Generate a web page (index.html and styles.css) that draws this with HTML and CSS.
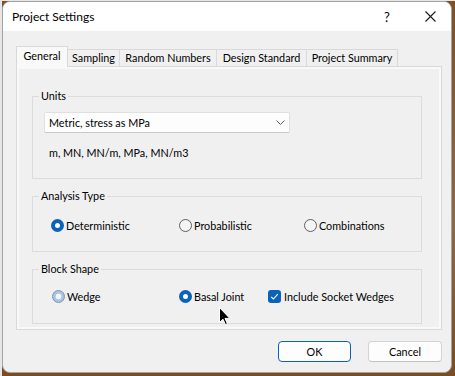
FILE: index.html
```html
<!DOCTYPE html>
<html lang="en">
<head>
    <meta charset="UTF-8">
    <title>Project Settings</title>
    <link rel="stylesheet" href="styles.css">
</head>
<body>
    <div class="window">
        <!-- caption bar -->
        <div class="titlebar">
            <span class="title">Project Settings</span>
            <span class="help">?</span>
            <svg class="close" width="11" height="11" viewBox="0 0 11 11">
                <path d="M0.5 0.5 L10.5 10.5 M10.5 0.5 L0.5 10.5" stroke="#1a1a1a" stroke-width="1.1" fill="none"/>
            </svg>
        </div>

        <div class="content">
            <div class="tabs">
                <div class="tab active w-general">General</div>
                <div class="tab w-sampling">Sampling</div>
                <div class="tab w-random">Random Numbers</div>
                <div class="tab w-design">Design Standard</div>
                <div class="tab w-summary">Project Summary</div>
            </div>

            <div class="panel">
                <fieldset class="group units">
                    <legend>Units</legend>
                    <div class="combo">
                        <span>Metric, stress as MPa</span>
                        <svg class="chevron" width="9" height="5" viewBox="0 0 9 5">
                            <polyline points="0.5,0.5 4.5,4.5 8.5,0.5" stroke="#5c5c5c" fill="none"/>
                        </svg>
                    </div>
                    <div class="unit-list">m, MN, MN/m, MPa, MN/m3</div>
                </fieldset>

                <fieldset class="group analysis">
                    <legend>Analysis Type</legend>
                    <div class="option-row">
                        <label class="option"><span class="radio checked"></span>Deterministic</label>
                        <label class="option"><span class="radio"></span>Probabilistic</label>
                        <label class="option"><span class="radio"></span>Combinations</label>
                    </div>
                </fieldset>

                <fieldset class="group block">
                    <legend>Block Shape</legend>
                    <div class="option-row">
                        <label class="option"><span class="radio pressed"></span>Wedge</label>
                        <label class="option"><span class="radio checked"></span>Basal Joint</label>
                        <label class="option">
                            <span class="checkbox">
                                <svg width="13" height="13" viewBox="0 0 13 13">
                                    <polyline points="3.2,6.8 5.4,9 9.8,4.2" stroke="#fff" stroke-width="1.1" fill="none"/>
                                </svg>
                            </span>Include Socket Wedges
                        </label>
                    </div>
                </fieldset>
            </div>

            <div class="buttons">
                <button class="btn default">OK</button>
                <button class="btn">Cancel</button>
            </div>
        </div>

        <!-- mouse pointer over the dialog -->
        <svg class="pointer" width="12" height="19" viewBox="0 0 12 19">
            <path d="M0.5 0.5 V15.5 L4 12.2 L6.4 17.6 L8.4 16.7 L6 11.4 H10.8 Z" fill="#000" stroke="#fff" stroke-width="1"/>
        </svg>
    </div>
</body>
</html>
```

FILE: styles.css
```css
* {
    box-sizing: border-box;
    margin: 0;
    padding: 0;
}

body {
    font-family: Lato, 'Liberation Sans', sans-serif;
    font-size: 10.8px;
    color: #000;
    height: 376px;
    overflow: hidden;
    background:
        linear-gradient(to right, #e6e6e6 2px, transparent 2px),
        linear-gradient(to bottom, #e6e6e6 1px, #7d5026 1px, #8a6a48 60%, #7a4c20 100%);
}

.window {
    position: relative;
    margin: 1px 0 0 2px;
    width: 450px;
    height: 372px;
    background: #f0f0f0;
    border: 1px solid #a3a3a3;
    border-radius: 8px;
    overflow: hidden;
}

/* caption */
.titlebar {
    height: 29px;
    background: #fff;
    display: flex;
    align-items: center;
    padding-left: 9px;
    font-size: 12px;
}

.title {
    flex: 1;
}

.help {
    width: 8px;
    margin-right: 33px;
    font-size: 13px;
}

.close {
    margin-right: 15px;
}

.content {
    padding: 15px 9px 0 13px;
}

/* tabs */
.tabs {
    display: flex;
    align-items: flex-end;
    height: 20px;
}

.tab {
    height: 17px;
    margin-left: -1px;
    border: 1px solid #d9d9d9;
    border-bottom: none;
    background: #f0f0f0;
    text-align: center;
    line-height: 16px;
}

.tab.active {
    position: relative;
    z-index: 1;
    height: 21px;
    margin-left: 0;
    margin-bottom: -1px;
    background: #f9f9f9;
    line-height: 17px;
}

.w-general { width: 52px; }
.w-sampling { width: 53px; }
.w-random { width: 98px; }
.w-design { width: 91px; }
.w-summary { width: 92px; }

.panel {
    width: 426px;
    height: 264px;
    border: 1px solid #d9d9d9;
    box-shadow: inset 0 0 0 2px #f9f9f9;
    padding: 21px 0 0 15px;
}

/* group boxes */
.group {
    width: 390px;
    border: 1px solid #dcdcdc;
    padding: 0;
}

.group legend {
    margin-left: 6px;
    padding: 0 2px;
    line-height: 16px;
}

.units { height: 91px; }
.analysis { height: 64px; margin-top: 9px; }
.block { height: 63px; margin-top: 9px; }

.combo {
    display: flex;
    align-items: center;
    width: 246px;
    height: 21px;
    margin: 8px 0 0 11px;
    padding: 0 4px 0 4px;
    background: #fdfdfd;
    border: 1px solid #e0e0e0;
    border-bottom-color: #c8c8c8;
    border-radius: 2px;
}

.chevron {
    margin-left: auto;
}

.unit-list {
    margin: 13px 0 0 16px;
    line-height: 14px;
}

.option-row {
    display: grid;
    align-items: center;
    line-height: 15px;
}

.analysis .option-row {
    grid-template-columns: 128px 125px auto;
    margin-top: 14px;
    padding-left: 18px;
}

.block .option-row {
    grid-template-columns: 127px 89px auto;
    margin-top: 12px;
    padding-left: 19px;
}

.option {
    display: flex;
    align-items: center;
    gap: 2px;
}

.radio {
    width: 13px;
    height: 13px;
    border-radius: 50%;
    border: 1px solid #5f5f5f;
    background: #f4f4f4;
}

.radio.checked {
    border: 4px solid #0a63b8;
    background: #fff;
}

.radio.pressed {
    border-color: #7896bb;
    background: radial-gradient(circle, #f2f5f9 0 2.6px, #aec4de 3.2px);
}

.checkbox {
    display: block;
    width: 13px;
    height: 13px;
    margin-right: 1px;
    border-radius: 3px;
    background: #0a63b8;
}

.checkbox svg {
    display: block;
}

/* dialog buttons */
.buttons {
    display: flex;
    justify-content: flex-end;
    gap: 17px;
    margin-top: 11px;
}

.btn {
    width: 73px;
    height: 21px;
    font-family: inherit;
    font-size: 10.8px;
    color: #000;
    background: #fdfdfd;
    border: 1px solid #d3d3d3;
    border-bottom-color: #c2c2c2;
    border-radius: 4px;
}

.btn + .btn {
    width: 74px;
}

.btn.default {
    border: 1px solid #0a63b8;
}

.pointer {
    position: absolute;
    left: 216px;
    top: 305px;
}
```
